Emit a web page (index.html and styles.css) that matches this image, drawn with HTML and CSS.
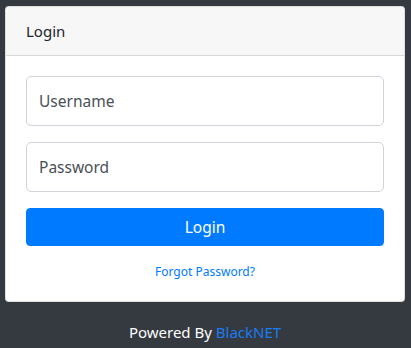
FILE: index.html
```html
<!DOCTYPE html>
<html lang="en">
<head>
    <meta charset="UTF-8">
    <meta name="viewport" content="width=device-width, initial-scale=1.0">
    <title>Login - BlackNET</title>
    <link rel="stylesheet" href="styles.css">
</head>
<body>
    <div class="login-card">
        <div class="card-header">Login</div>
        <form class="card-body" id="loginForm">
            <input type="text" class="form-control" name="username" placeholder="Username" required>
            <input type="password" class="form-control" name="password" placeholder="Password" required>
            <button type="submit" class="login-btn">Login</button>
            <div class="forgot">
                <a href="#">Forgot Password?</a>
            </div>
        </form>
    </div>
    <div class="footer">
        Powered By <a href="#">BlackNET</a>
    </div>
</body>
</html>
```

FILE: styles.css
```css
*, *::before, *::after {
    box-sizing: border-box;
}

body {
    font-family: 'Noto Sans', 'Open Sans', sans-serif;
    margin: 0;
    padding: 6px 6px 0 5px;
    background-color: #343a40;
    color: #212529;
    font-size: 15px;
    line-height: 24px;
    min-height: 100vh;
}

a {
    text-decoration: none;
    color: #007bff;
}

.login-card {
    background-color: #fff;
    border: 1px solid rgba(0, 0, 0, 0.125);
    border-radius: 4px;
    overflow: hidden;
}

.card-header {
    padding: 12px 20px;
    background-color: #f7f7f7;
    border-bottom: 1px solid rgba(0, 0, 0, 0.125);
}

.card-body {
    display: flex;
    flex-direction: column;
    gap: 16px;
    padding: 20px;
    margin: 0;
}

.form-control {
    height: 50px;
    padding: 0 12px;
    font-family: inherit;
    font-size: 15.5px;
    color: #495057;
    border: 1px solid #ced4da;
    border-radius: 5px;
    background-color: #fff;
}

.form-control::placeholder {
    color: #495057;
    opacity: 1;
}

.login-btn {
    height: 38px;
    font-family: inherit;
    font-size: 15.5px;
    color: #fff;
    background-color: #007bff;
    border: 1px solid #007bff;
    border-radius: 4px;
    cursor: pointer;
}

.forgot {
    text-align: center;
    font-size: 12px;
    line-height: 18px;
    margin-top: 1px;
}

.footer {
    margin-top: 18px;
    text-align: center;
    color: #fff;
}

.footer a {
    color: #1a7cf2;
}
```
